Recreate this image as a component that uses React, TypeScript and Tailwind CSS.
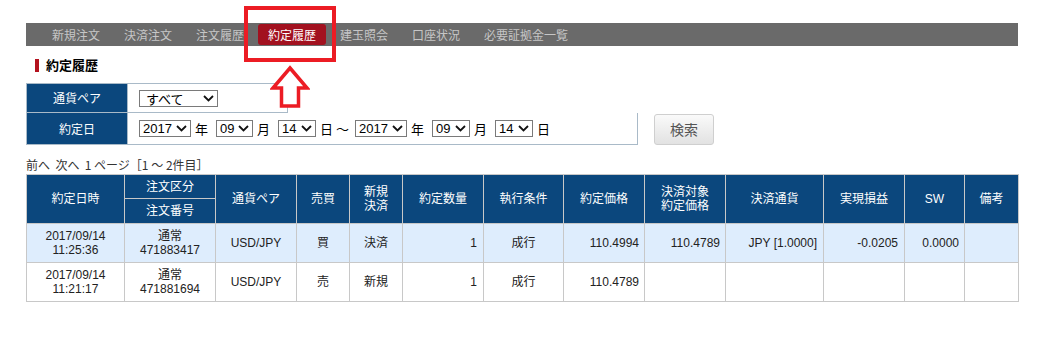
import React from "react";

const FONT = { fontFamily: '"Noto Sans CJK JP", "Noto Sans", sans-serif' };
const TABLE_FONT = { fontFamily: '"Liberation Sans", "Noto Sans CJK JP", sans-serif' };

const navItems = ["新規注文", "決済注文", "注文履歴", "約定履歴", "建玉照会", "口座状況", "必要証拠金一覧"];

function FakeSelect({ value, width }: { value: string; width: number }) {
  return (
    <span
      className="inline-flex items-center justify-between h-[17px] border border-[#7a7a7a] bg-white pl-[3px] pr-[3px] text-[13px] leading-none text-black"
      style={{ width, fontFamily: '"Liberation Sans", "Noto Sans CJK JP", sans-serif' }}
    >
      <span>{value}</span>
      <svg width="11" height="7" viewBox="0 0 11 7" className="shrink-0">
        <path d="M1 1 L5.5 5.5 L10 1" fill="none" stroke="#111" strokeWidth="1.8" />
      </svg>
    </span>
  );
}

type Row = {
  date: string;
  time: string;
  kind: string;
  no: string;
  pair: string;
  side: string;
  open: string;
  qty: string;
  cond: string;
  price: string;
  target: string;
  ccy: string;
  pnl: string;
  sw: string;
  note: string;
};

const rows: Row[] = [
  {
    date: "2017/09/14",
    time: "11:25:36",
    kind: "通常",
    no: "471883417",
    pair: "USD/JPY",
    side: "買",
    open: "決済",
    qty: "1",
    cond: "成行",
    price: "110.4994",
    target: "110.4789",
    ccy: "JPY [1.0000]",
    pnl: "-0.0205",
    sw: "0.0000",
    note: "",
  },
  {
    date: "2017/09/14",
    time: "11:21:17",
    kind: "通常",
    no: "471881694",
    pair: "USD/JPY",
    side: "売",
    open: "新規",
    qty: "1",
    cond: "成行",
    price: "110.4789",
    target: "",
    ccy: "",
    pnl: "",
    sw: "",
    note: "",
  },
];

const widths = [98, 91, 81, 53, 53, 81, 80, 81, 81, 98, 81, 60, 54];

export default function App() {
  const th = "border border-[#c8c8c8] bg-[#0b477d] text-white font-normal text-[12px] leading-[14px] text-center";
  const td = "border border-[#c8c8c8] text-[12px] leading-[14px] text-[#222]";

  return (
    <div className="relative w-[1050px] h-[355px] bg-white pl-[26px] pt-[23px]" style={FONT}>
      {/* nav */}
      <div className="flex items-center w-[992px] h-[23px] bg-[#6a6a6a] pl-[16px] gap-[4px]">
        {navItems.map((n) => (
          <div
            key={n}
            className={`h-[21px] px-[10px] flex items-center text-[12px] rounded-[3px] ${
              n === "約定履歴" ? "bg-[#a2111f] text-white" : "text-[#c6c6c6]"
            }`}
          >
            {n}
          </div>
        ))}
      </div>

      {/* title */}
      <div className="flex items-center h-[37px] pl-[9px] gap-[7px]">
        <span className="w-[4px] h-[13px] bg-[#b4121e] mt-[2px]" />
        <span className="text-[13px] font-bold text-black">約定履歴</span>
      </div>

      {/* filter */}
      <div className="flex flex-col">
        <div className="flex w-[262px] h-[30px] border border-[#a9bac8]">
          <div className="w-[100px] bg-[#0b477d] text-white text-[12px] flex items-center justify-center">通貨ペア</div>
          <div className="flex-1 flex items-center pl-[11px] border-l border-[#a9bac8]">
            <span className="inline-flex items-center justify-between h-[17px] w-[79px] border border-[#7a7a7a] bg-white pl-[6px] pr-[3px] text-[13px] leading-none text-black">
              <span>すべて</span>
              <svg width="11" height="7" viewBox="0 0 11 7">
                <path d="M1 1 L5.5 5.5 L10 1" fill="none" stroke="#111" strokeWidth="1.8" />
              </svg>
            </span>
          </div>
        </div>
        <div className="flex items-center">
          <div className="flex w-[612px] h-[32px] border border-t-0 border-[#a9bac8]">
            <div className="w-[100px] bg-[#0b477d] text-white text-[12px] flex items-center justify-center">約定日</div>
            <div className="flex-1 flex items-center pl-[11px] border-l border-[#a9bac8] text-[13px] text-black">
              <FakeSelect value="2017" width={52} />
              <span className="ml-[4px] mr-[8px]">年</span>
              <FakeSelect value="09" width={37} />
              <span className="ml-[4px] mr-[8px]">月</span>
              <FakeSelect value="14" width={38} />
              <span className="ml-[4px] mr-[6px]">日 ～</span>
              <FakeSelect value="2017" width={52} />
              <span className="ml-[4px] mr-[8px]">年</span>
              <FakeSelect value="09" width={38} />
              <span className="ml-[4px] mr-[8px]">月</span>
              <FakeSelect value="14" width={38} />
              <span className="ml-[4px]">日</span>
            </div>
          </div>
          <button className="ml-[16px] w-[60px] h-[31px] rounded-[3px] border border-[#cfcfcf] bg-gradient-to-b from-[#fafafa] to-[#e2e2e2] text-[14px] text-[#555]">
            検索
          </button>
        </div>
      </div>

      {/* pagination */}
      <div className="mt-[11px] h-[17px] text-[12px] leading-[17px] text-[#333]">前へ&nbsp; 次へ&nbsp; 1 ページ［1 ～ 2件目］</div>

      {/* table */}
      <table className="mt-[1px] border-collapse table-fixed w-[992px]" style={TABLE_FONT}>
        <colgroup>
          {widths.map((w, i) => (
            <col key={i} style={{ width: w }} />
          ))}
        </colgroup>
        <thead>
          <tr className="h-[24px]">
            <th rowSpan={2} className={th}>約定日時</th>
            <th className={th}>注文区分</th>
            <th rowSpan={2} className={th}>通貨ペア</th>
            <th rowSpan={2} className={th}>売買</th>
            <th rowSpan={2} className={th}>新規<br />決済</th>
            <th rowSpan={2} className={th}>約定数量</th>
            <th rowSpan={2} className={th}>執行条件</th>
            <th rowSpan={2} className={th}>約定価格</th>
            <th rowSpan={2} className={th}>決済対象<br />約定価格</th>
            <th rowSpan={2} className={th}>決済通貨</th>
            <th rowSpan={2} className={th}>実現損益</th>
            <th rowSpan={2} className={th}>SW</th>
            <th rowSpan={2} className={th}>備考</th>
          </tr>
          <tr className="h-[25px]">
            <th className={th}>注文番号</th>
          </tr>
        </thead>
        <tbody>
          {rows.map((r, i) => (
            <tr key={i} className={`h-[39px] ${i === 0 ? "bg-[#deedfd]" : "bg-white"}`}>
              <td className={`${td} text-center`}>{r.date}<br />{r.time}</td>
              <td className={`${td} text-center`}>{r.kind}<br />{r.no}</td>
              <td className={`${td} text-center`}>{r.pair}</td>
              <td className={`${td} text-center`}>{r.side}</td>
              <td className={`${td} text-center`}>{r.open}</td>
              <td className={`${td} text-right pr-[6px]`}>{r.qty}</td>
              <td className={`${td} text-center`}>{r.cond}</td>
              <td className={`${td} text-right pr-[5px]`}>{r.price}</td>
              <td className={`${td} text-right pr-[5px]`}>{r.target}</td>
              <td className={`${td} text-right pr-[6px]`}>{r.ccy}</td>
              <td className={`${td} text-right pr-[6px]`}>{r.pnl}</td>
              <td className={`${td} text-right pr-[5px]`}>{r.sw}</td>
              <td className={`${td}`}>{r.note}</td>
            </tr>
          ))}
        </tbody>
      </table>

      {/* annotation overlay */}
      <div className="absolute left-[244px] top-[6px] w-[92px] h-[56px] border-[4px] border-[#ec1c24]" />
      <svg className="absolute left-[270px] top-[65px]" width="40" height="44" viewBox="0 0 40 44">
        <polygon
          points="20,3 37,23 28.5,23 28.5,41 11.5,41 11.5,23 3,23"
          fill="white"
          stroke="#ec1c24"
          strokeWidth="3.5"
          strokeLinejoin="miter"
        />
      </svg>
    </div>
  );
}
